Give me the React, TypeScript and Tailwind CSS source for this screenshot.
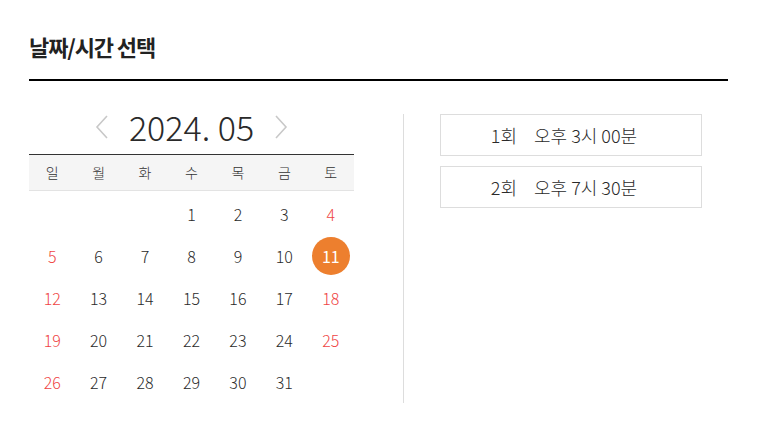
import React from "react";

const WEEKDAYS = ["일", "월", "화", "수", "목", "금", "토"];
const SLOTS = [
  { round: "1회", time: "오후 3시 00분" },
  { round: "2회", time: "오후 7시 30분" },
];

function Chevron({ dir }: { dir: "left" | "right" }) {
  return (
    <svg width="14" height="26" viewBox="0 0 14 26" fill="none">
      <path
        d={dir === "left" ? "M12 2L2 13l10 11" : "M2 2l10 11L2 24"}
        stroke="#c8c8c8"
        strokeWidth="1.6"
      />
    </svg>
  );
}

export default function App() {
  const cells: (number | null)[] = [null, null, null];
  for (let d = 1; d <= 31; d++) cells.push(d);
  while (cells.length % 7) cells.push(null);
  const selected = 11;

  return (
    <div
      className="w-[757px] h-[430px] bg-white px-[29px] text-[#333]"
      style={{ fontFamily: '"Noto Sans CJK KR", "Noto Sans", sans-serif' }}
    >
      <h2 className="pt-[32px] pb-[19px] leading-[28px] text-[22px] font-bold tracking-[-0.05em] text-[#222] border-b-2 border-black">
        날짜/시간 선택
      </h2>

      <div className="flex mt-[27px]">
        <div className="w-[325px]">
          <div className="h-[46px] flex items-center justify-center gap-[20px] pb-[8px]">
            <Chevron dir="left" />
            <span className="text-[34px] leading-none font-light text-[#2a2a2a]">2024. 05</span>
            <Chevron dir="right" />
          </div>
          <div className="grid grid-cols-7 h-[37px] items-center bg-[#f5f5f5] border-t border-[#333] border-b border-b-[#e3e3e3]">
            {WEEKDAYS.map((w) => (
              <div key={w} className="text-center text-[14px] font-light text-[#333]">
                {w}
              </div>
            ))}
          </div>
          <div className="grid grid-cols-7 mt-[2px]">
            {cells.map((d, i) => {
              const col = i % 7;
              const red = col === 0 || col === 6;
              return (
                <div key={i} className="h-[42px] flex items-center justify-center">
                  {d === selected ? (
                    <span className="w-[38px] h-[38px] rounded-full bg-[#ed7f2e] text-white text-[16px] flex items-center justify-center">
                      {d}
                    </span>
                  ) : (
                    d && (
                      <span
                        className={`text-[16px] font-light ${red ? "text-[#ef4444]" : "text-[#2a2a2a]"}`}
                      >
                        {d}
                      </span>
                    )
                  )}
                </div>
              );
            })}
          </div>
        </div>

        <div className="ml-[49px] mt-[6px] h-[289px] border-l border-[#ddd] pl-[36px] flex flex-col gap-[10px]">
          {SLOTS.map((s) => (
            <button
              key={s.round}
              className="w-[262px] h-[42px] border border-[#ddd] bg-white pr-[14px] text-[18px] font-light text-[#2a2a2a] flex items-center justify-center"
            >
              <span>{s.round}</span>
              <span className="ml-[17px]">{s.time}</span>
            </button>
          ))}
        </div>
      </div>
    </div>
  );
}
